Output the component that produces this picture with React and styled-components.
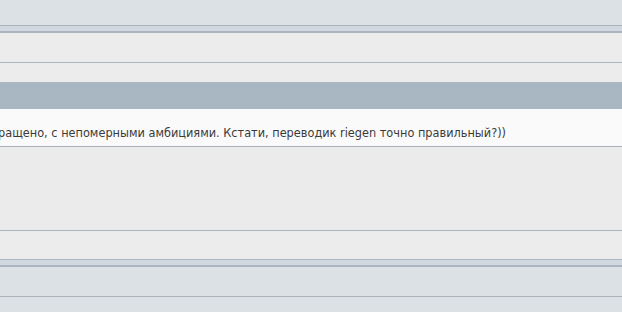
import React from 'react';
import styled, { createGlobalStyle } from 'styled-components';

const GlobalStyle = createGlobalStyle`
  html, body {
    margin: 0;
    padding: 0;
    background: #dce1e5;
    overflow: hidden;
  }
`;

const Page = styled.div`
  width: 622px;
  height: 312px;
  display: flex;
  flex-direction: column;
  overflow: hidden;
  font-family: "DejaVu Sans Condensed", "DejaVu Sans", sans-serif;
`;

const TopBar = styled.div`
  height: 25px;
  flex: none;
  background: #dce1e5;
  border-bottom: 1px solid #a8b3be;
`;

const Divider = styled.div`
  height: 5px;
  flex: none;
  background: #d2d8df;
  border-bottom: 2px solid #aab5c1;
`;

const Strip = styled.div`
  height: ${p => p.h}px;
  flex: none;
  background: ${p => p.bg || '#ececec'};
  border-bottom: ${p => (p.line ? '1px solid #a9b6c2' : 'none')};
`;

const Header = styled.div`
  height: 27px;
  flex: none;
  background: #a9b7c3;
`;

const PostRow = styled.div`
  height: 38px;
  flex: none;
  background: #fafafa;
  border-bottom: 1px solid #a7b0b9;
  display: flex;
  justify-content: flex-end;
  align-items: center;
  padding: 9px 116px 0 0;
  box-sizing: border-box;
  overflow: hidden;
  white-space: nowrap;
`;

const PostText = styled.span`
  font-size: 12.6px;
  color: #3a3a3a;
`;

const Body = styled.div`
  height: 83px;
  flex: none;
  background: #ebebeb;
  border-bottom: 1px solid #a9b3bd;
`;

const Footer = styled.div`
  flex: 1;
  background: #dce1e5;
  display: flex;
  flex-direction: column;
`;

const FooterRow = styled.div`
  height: 29px;
  flex: none;
  border-bottom: 1px solid #aab2ba;
`;

export default function App() {
  return (
    <Page>
      <GlobalStyle />
      <TopBar />
      <Divider />
      <Strip h={29} line />
      <Strip h={19} />
      <Header />
      <PostRow>
        <PostText>
          сокращено, с непомерными амбициями. Кстати, переводик riegen точно правильный?))
        </PostText>
      </PostRow>
      <Body />
      <Strip h={28} line />
      <Divider />
      <Footer>
        <FooterRow />
      </Footer>
    </Page>
  );
}
